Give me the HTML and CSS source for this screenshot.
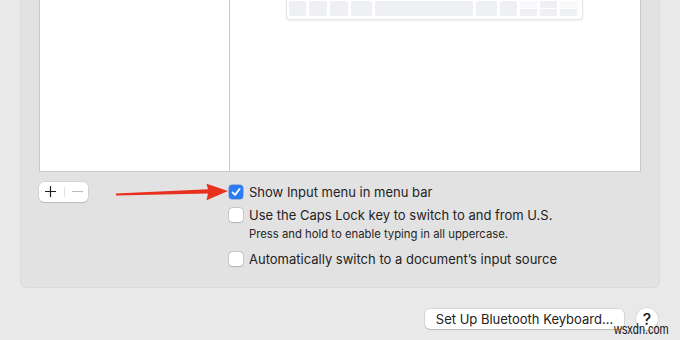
FILE: index.html
```html
<!DOCTYPE html>
<html>
<head>
<meta charset="utf-8">
<link rel="stylesheet" href="styles.css">
</head>
<body>
<div class="page">
  <div class="panel">
    <div class="list">
      <div class="col-left"></div>
      <div class="col-right">
        <div class="keyboard">
          <span class="key w17"></span>
          <span class="key w18"></span>
          <span class="key w18"></span>
          <span class="key w21"></span>
          <span class="key space"></span>
          <span class="key w21"></span>
          <span class="key w17"></span>
          <span class="arrowkey"><span class="half faint"></span><span class="half"></span></span>
          <span class="arrowkey"><span class="half"></span><span class="half"></span></span>
          <span class="arrowkey"><span class="half faint"></span><span class="half"></span></span>
        </div>
      </div>
    </div>
    <div class="controls">
      <div class="pm">
        <svg width="49" height="20" viewBox="0 0 49 20">
          <path d="M6 9.5 H17 M11.5 4 V15" stroke="#1e1e1e" stroke-width="1.2" fill="none"/>
          <path d="M25.5 5 V15" stroke="#e2e2e2" stroke-width="1" fill="none"/>
          <path d="M33 9.5 H44" stroke="#bdbdbd" stroke-width="1.1" fill="none"/>
        </svg>
      </div>
      <div class="options">
        <label class="opt"><span class="cb checked"><svg viewBox="0 0 14 14" width="14" height="14"><path d="M3.6 7.4 L6 9.8 L10.6 4" fill="none" stroke="#fff" stroke-width="1.9" stroke-linecap="round" stroke-linejoin="round"/></svg></span><span>Show Input menu in menu bar</span></label>
        <label class="opt"><span class="cb"></span><span>Use the Caps Lock key to switch to and from U.S.</span></label>
        <div class="sub">Press and hold to enable typing in all uppercase.</div>
        <label class="opt"><span class="cb"></span><span>Automatically switch to a document’s input source</span></label>
      </div>
    </div>
  </div>
  <div class="footer">
    <button class="btn">Set Up Bluetooth Keyboard...</button>
    <span class="help">?</span>
  </div>
</div>
<svg class="annot" width="680" height="340" viewBox="0 0 680 340">
  <polygon points="116,193.6 208,189.2 206.5,183.8 228,191 206.5,200.2 208,193.4 116,195.4" fill="#e8301f"/>
</svg>
<div class="watermark">wsxdn.com</div>
</body>
</html>
```

FILE: styles.css
```css
html, body {
  margin: 0;
  padding: 0;
}
body {
  width: 680px;
  height: 340px;
  background: #e9e9ea;
  font-family: Inter, "Noto Sans", "Liberation Sans", sans-serif;
  color: #1f1f1f;
  position: relative;
  overflow: hidden;
}
.page {
  display: flex;
  flex-direction: column;
}
.panel {
  margin-left: 20px;
  width: 640px;
  height: 288px;
  box-sizing: border-box;
  background: #e2e2e3;
  border: 1px solid #dadadb;
  border-top: none;
  border-radius: 0 0 7px 7px;
  padding-left: 18px;
}
.list {
  width: 602px;
  height: 172px;
  box-sizing: border-box;
  background: #fff;
  border: 1px solid #c9c9ca;
  border-top: none;
  display: flex;
}
.col-left {
  width: 189px;
  border-right: 1px solid #cbcbcc;
}
.col-right {
  flex: 1;
  padding-left: 56px;
}
.keyboard {
  width: 297px;
  height: 20px;
  box-sizing: border-box;
  background: #fff;
  border: 1px solid #e4e5e8;
  border-top: none;
  border-radius: 0 0 4px 4px;
  box-shadow: 0 1px 2px rgba(0,0,0,0.08);
  display: flex;
  gap: 3px;
  padding: 1px 3px 0 2px;
}
.key {
  height: 15px;
  background: #eef0f4;
  border-radius: 2px;
}
.w17 { width: 17px; }
.w18 { width: 18px; }
.w21 { width: 21px; }
.space { width: 98px; }
.arrowkey {
  width: 17px;
  display: flex;
  flex-direction: column;
  gap: 1px;
}
.half {
  height: 7px;
  background: #eef0f4;
  border-radius: 1px;
}
.half.faint {
  background: #f8f9fa;
}
.controls {
  display: grid;
  grid-template-columns: 190px 1fr;
  padding-top: 10px;
}
.pm {
  width: 49px;
  height: 20px;
  background: #fff;
  border-radius: 5px;
  box-shadow: 0 0 0 0.5px rgba(0,0,0,0.12), 0 1px 1px rgba(0,0,0,0.12);
}
.pm svg { display: block; }
.options {
  display: flex;
  flex-direction: column;
  padding-top: 3px;
}
.opt {
  display: flex;
  align-items: center;
  gap: 6px;
  height: 14px;
  font-size: 13px;
  color: #222;
  margin-bottom: 9px;
}
.cb {
  width: 14px;
  height: 14px;
  box-sizing: border-box;
  background: #fff;
  border-radius: 3.5px;
  box-shadow: 0 0 0 0.5px rgba(0,0,0,0.22), 0 0.5px 1px rgba(0,0,0,0.12);
  flex: none;
}
.cb svg { display: block; }
.cb.checked {
  background: #2a7cf6;
  box-shadow: 0 0 0 0.5px rgba(0,60,160,0.5);
}
.sub {
  font-size: 11.3px;
  color: #262626;
  padding-left: 20px;
  margin-top: -3px;
  margin-bottom: 11px;
  line-height: 13px;
}
.footer {
  display: flex;
  justify-content: flex-end;
  align-items: center;
  gap: 12px;
  padding: 20px 22px 0 0;
}
.btn {
  font-family: inherit;
  font-size: 13px;
  color: #222;
  background: #fff;
  border: none;
  border-radius: 5px;
  box-shadow: 0 0 0 0.5px rgba(0,0,0,0.15), 0 1px 1px rgba(0,0,0,0.14);
  width: 199px;
  height: 20px;
  padding: 0;
  line-height: 20px;
}
.help {
  width: 22px;
  height: 22px;
  border-radius: 50%;
  background: #fff;
  box-shadow: 0 0 0 0.5px rgba(0,0,0,0.12), 0 1px 1px rgba(0,0,0,0.12);
  display: flex;
  align-items: center;
  justify-content: center;
  font-size: 16px;
  font-weight: 500;
  color: #222;
}
.annot {
  position: absolute;
  left: 0;
  top: 0;
  pointer-events: none;
}
.watermark {
  position: absolute;
  left: 614px;
  top: 321px;
  font-family: "Liberation Sans", Arial, sans-serif;
  font-size: 14px;
  line-height: 17px;
  color: #111;
  transform: scaleX(0.78);
  transform-origin: left center;
}
```
